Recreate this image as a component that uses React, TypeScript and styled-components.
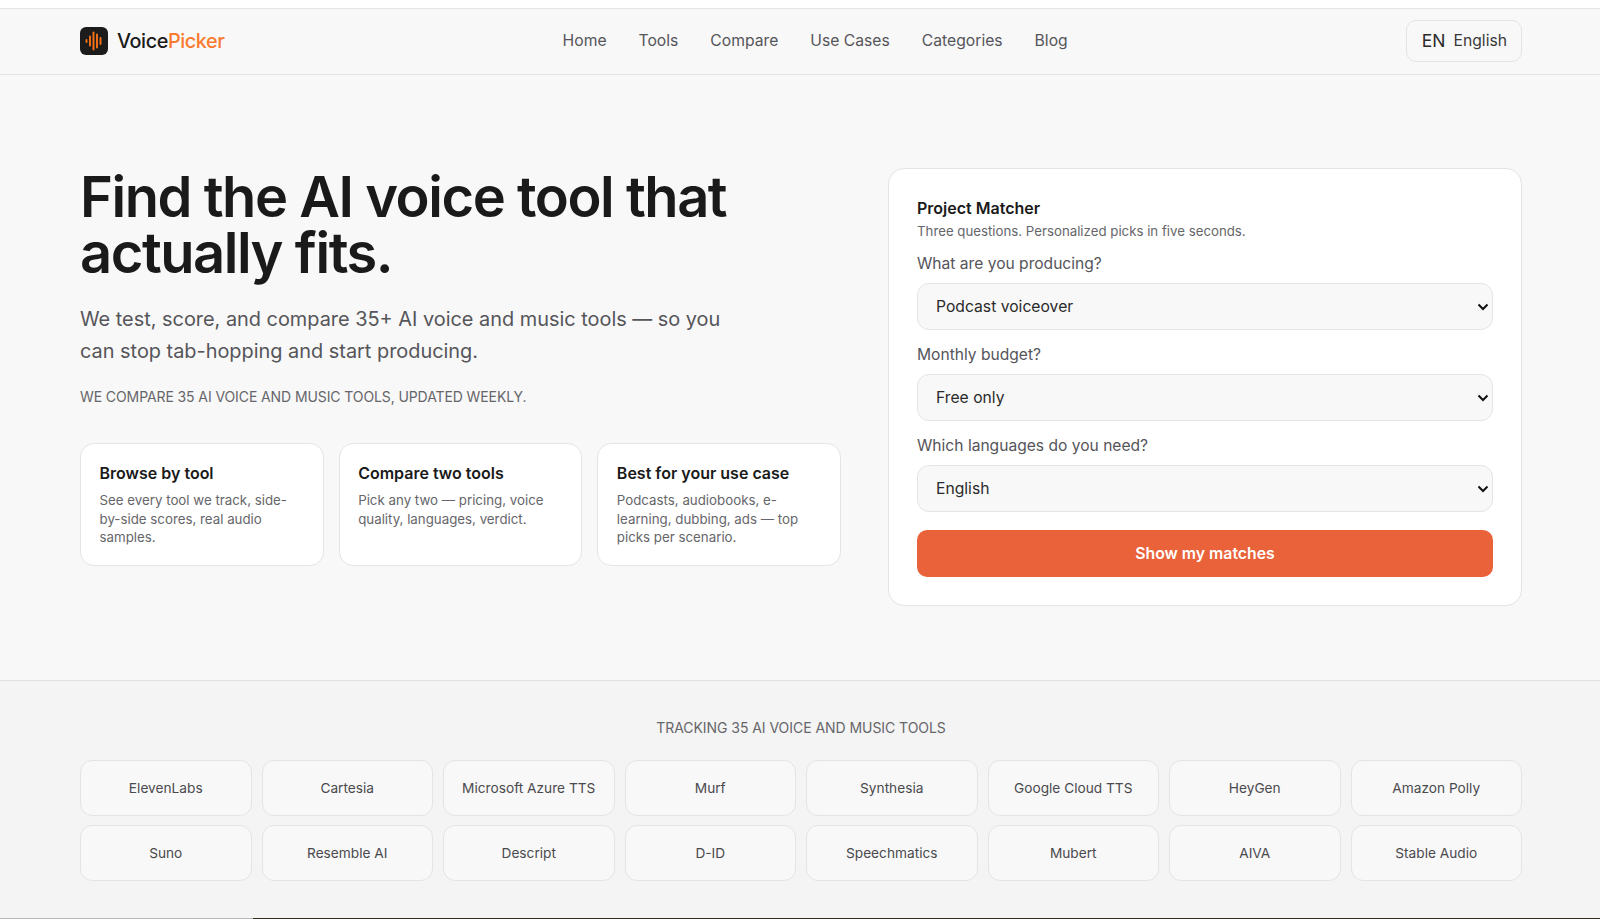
import styled, { createGlobalStyle } from "styled-components";

const GlobalStyle = createGlobalStyle`
  * {
    box-sizing: border-box;
  }
  html, body {
    margin: 0;
    padding: 0;
    background: #fff;
    overflow: hidden;
  }
  body {
    font-family: Inter, "Liberation Sans", sans-serif;
    color: #1a1a1a;
  }
`;

const links = ["Home", "Tools", "Compare", "Use Cases", "Categories", "Blog"];

const entries = [
  {
    title: "Browse by tool",
    text: "See every tool we track, side-by-side scores, real audio samples.",
  },
  {
    title: "Compare two tools",
    text: "Pick any two — pricing, voice quality, languages, verdict.",
  },
  {
    title: "Best for your use case",
    text: "Podcasts, audiobooks, e-learning, dubbing, ads — top picks per scenario.",
  },
];

const questions = [
  { label: "What are you producing?", value: "Podcast voiceover" },
  { label: "Monthly budget?", value: "Free only" },
  { label: "Which languages do you need?", value: "English" },
];

const tools = [
  "ElevenLabs",
  "Cartesia",
  "Microsoft Azure TTS",
  "Murf",
  "Synthesia",
  "Google Cloud TTS",
  "HeyGen",
  "Amazon Polly",
  "Suno",
  "Resemble AI",
  "Descript",
  "D-ID",
  "Speechmatics",
  "Mubert",
  "AIVA",
  "Stable Audio",
];

const chevron =
  "data:image/svg+xml,%3Csvg xmlns='http://www.w3.org/2000/svg' width='12' height='8' viewBox='0 0 12 8'%3E%3Cpath d='M1.5 1.5 6 6l4.5-4.5' fill='none' stroke='%23111' stroke-width='2'/%3E%3C/svg%3E";

const LogoMark = () => (
  <SLogoMark viewBox="0 0 28 28" aria-hidden="true">
    <rect width="28" height="28" rx="6" fill="#1c1c1c" />
    <g stroke="#f97316" strokeWidth="1.9" strokeLinecap="round">
      <path d="M6.5 13v2" />
      <path d="M10 9.5v9" />
      <path d="M13.5 5.5v17" />
      <path d="M17 7.5v13" />
      <path d="M20.5 11v6" />
    </g>
  </SLogoMark>
);

const App = () => {
  return (
    <SPage>
      <GlobalStyle />
      <SNav>
        <SBrand>
          <LogoMark />
          <SBrandName>
            Voice<span>Picker</span>
          </SBrandName>
        </SBrand>
        <SLinks>
          {links.map((link) => (
            <SLink key={link}>{link}</SLink>
          ))}
        </SLinks>
        <SLang>
          <SLangCode>EN</SLangCode>
          <span>English</span>
        </SLang>
      </SNav>

      <SHero>
        <SIntro>
          <SHeadline>Find the AI voice tool that actually fits.</SHeadline>
          <SLead>
            We test, score, and compare 35+ AI voice and music tools — so you
            can stop tab-hopping and start producing.
          </SLead>
          <SNote>WE COMPARE 35 AI VOICE AND MUSIC TOOLS, UPDATED WEEKLY.</SNote>
          <SEntries>
            {entries.map((entry) => (
              <SEntry key={entry.title}>
                <SEntryTitle>{entry.title}</SEntryTitle>
                <SEntryText>{entry.text}</SEntryText>
              </SEntry>
            ))}
          </SEntries>
        </SIntro>

        <SMatcher>
          <SMatcherTitle>Project Matcher</SMatcherTitle>
          <SMatcherText>
            Three questions. Personalized picks in five seconds.
          </SMatcherText>
          {questions.map((question) => (
            <SField key={question.label}>
              <SLabel>{question.label}</SLabel>
              <SSelect defaultValue={question.value}>
                <option>{question.value}</option>
              </SSelect>
            </SField>
          ))}
          <SSubmit>Show my matches</SSubmit>
        </SMatcher>
      </SHero>

      <STools>
        <SToolsTitle>TRACKING 35 AI VOICE AND MUSIC TOOLS</SToolsTitle>
        <SToolGrid>
          {tools.map((tool) => (
            <SToolChip key={tool}>{tool}</SToolChip>
          ))}
        </SToolGrid>
      </STools>

      <SBottomEdge>
        <SEdgeLight />
        <SEdgeDark />
      </SBottomEdge>
    </SPage>
  );
};

const SPage = styled.div`
  height: 919px;
  padding-top: 8px;
  overflow: hidden;
  background: #fff;
`;

const SNav = styled.header`
  display: flex;
  align-items: center;
  justify-content: space-between;
  height: 67px;
  padding: 0 78px 2px 80px;
  background: #f8f8f8;
  border-top: 1px solid #e4e4e2;
  border-bottom: 1px solid #e4e4e2;
`;

const SBrand = styled.div`
  display: flex;
  align-items: center;
  gap: 9px;
`;

const SLogoMark = styled.svg`
  width: 28px;
  height: 28px;
  display: block;
`;

const SBrandName = styled.div`
  font-size: 19.8px;
  font-weight: 500;
  letter-spacing: -0.4px;
  color: #1a1a1a;

  span {
    color: #fa7a2e;
  }
`;

const SLinks = styled.nav`
  display: flex;
  gap: 32px;
`;

const SLink = styled.a`
  font-size: 15.7px;
  color: #55555a;
`;

const SLang = styled.div`
  display: flex;
  align-items: center;
  gap: 8px;
  height: 42px;
  padding: 0 14px 0 15px;
  border: 1px solid #e4e4e2;
  border-radius: 10px;
  font-size: 15.7px;
  color: #3a3a3a;
`;

const SLangCode = styled.span`
  font-size: 17.5px;
  color: #2a2a2a;
`;

const SHero = styled.main`
  display: grid;
  grid-template-columns: 761px 634px;
  justify-content: space-between;
  align-items: start;
  height: 605px;
  padding: 93px 78px 0 80px;
  background: #f8f8f8;
`;

const SIntro = styled.div`
  display: flex;
  flex-direction: column;
  padding-top: 0.5px;
`;

const SHeadline = styled.h1`
  margin: 0;
  max-width: 680px;
  font-size: 56px;
  line-height: 56px;
  font-weight: 600;
  letter-spacing: -1.45px;
  color: #1a1a1a;
`;

const SLead = styled.p`
  margin: 22.5px 0 0;
  max-width: 660px;
  font-size: 19.9px;
  line-height: 32px;
  color: #55555a;
`;

const SNote = styled.p`
  margin: 20px 0 0;
  font-size: 14px;
  line-height: 20px;
  letter-spacing: -0.1px;
  color: #66666a;
`;

const SEntries = styled.div`
  display: grid;
  grid-template-columns: repeat(3, 1fr);
  gap: 15px;
  margin-top: 36px;
`;

const SEntry = styled.div`
  height: 123px;
  padding: 18px 18px 18px 18.5px;
  background: #fff;
  border: 1px solid #e4e4e2;
  border-radius: 14px;
`;

const SEntryTitle = styled.div`
  font-size: 16px;
  line-height: 22px;
  font-weight: 600;
  color: #1a1a1a;
`;

const SEntryText = styled.div`
  margin-top: 7px;
  font-size: 13.3px;
  line-height: 18.5px;
  color: #66666a;
`;

const SMatcher = styled.form`
  display: flex;
  flex-direction: column;
  padding: 28px;
  background: #fff;
  border: 1px solid #e4e4e2;
  border-radius: 16px;
`;

const SMatcherTitle = styled.div`
  font-size: 16px;
  line-height: 22px;
  font-weight: 600;
  color: #1a1a1a;
`;

const SMatcherText = styled.div`
  margin-top: 2px;
  font-size: 13.25px;
  line-height: 20px;
  color: #66666a;
`;

const SField = styled.label`
  display: flex;
  flex-direction: column;
  gap: 7px;
  margin-top: 11px;
  margin-bottom: 2px;
`;

const SLabel = styled.span`
  font-size: 15.6px;
  line-height: 24px;
  color: #55555a;
`;

const SSelect = styled.select`
  appearance: none;
  width: 100%;
  height: 47px;
  padding: 0 30px 0 18px;
  font-family: inherit;
  font-size: 15.7px;
  color: #2a2a2a;
  background: #f8f8f8 url("${chevron}") no-repeat right 3px center;
  border: 1px solid #e4e4e2;
  border-radius: 12px;
`;

const SSubmit = styled.button`
  height: 47px;
  margin-top: 16px;
  font-family: inherit;
  font-size: 15.8px;
  font-weight: 600;
  color: #fff;
  background: #e9623a;
  border: none;
  border-radius: 10px;
`;

const STools = styled.section`
  height: 238px;
  padding: 37px 78px 0 80px;
  background: #f4f4f4;
  border-top: 1px solid #e0e0de;
`;

const SToolsTitle = styled.div`
  font-size: 14px;
  line-height: 20px;
  letter-spacing: -0.05px;
  text-align: center;
  color: #66666a;
`;

const SToolGrid = styled.div`
  display: grid;
  grid-template-columns: repeat(8, 1fr);
  grid-auto-rows: 56px;
  column-gap: 10px;
  row-gap: 9px;
  margin-top: 22px;
`;

const SToolChip = styled.div`
  display: flex;
  align-items: center;
  justify-content: center;
  font-size: 13.7px;
  color: #4a4a4e;
  background: #f8f8f8;
  border: 1px solid #e4e4e2;
  border-radius: 12px;
`;

const SBottomEdge = styled.div`
  display: flex;
  height: 1px;
`;

const SEdgeLight = styled.div`
  width: 253px;
  background: #b8b8b8;
`;

const SEdgeDark = styled.div`
  flex: 1;
  background: #2e2a20;
`;

export default App;
